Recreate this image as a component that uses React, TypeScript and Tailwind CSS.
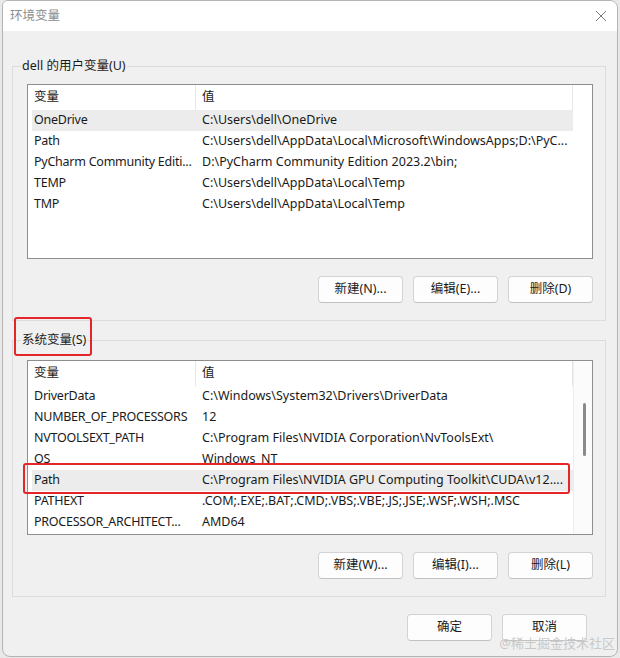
import React from "react";

type Row = { name: string; value: string; selected?: boolean };

const userVars: Row[] = [
  { name: "OneDrive", value: "C:\\Users\\dell\\OneDrive", selected: true },
  { name: "Path", value: "C:\\Users\\dell\\AppData\\Local\\Microsoft\\WindowsApps;D:\\PyC..." },
  { name: "PyCharm Community Editi...", value: "D:\\PyCharm Community Edition 2023.2\\bin;" },
  { name: "TEMP", value: "C:\\Users\\dell\\AppData\\Local\\Temp" },
  { name: "TMP", value: "C:\\Users\\dell\\AppData\\Local\\Temp" },
];

const systemVars: Row[] = [
  { name: "DriverData", value: "C:\\Windows\\System32\\Drivers\\DriverData" },
  { name: "NUMBER_OF_PROCESSORS", value: "12" },
  { name: "NVTOOLSEXT_PATH", value: "C:\\Program Files\\NVIDIA Corporation\\NvToolsExt\\" },
  { name: "OS", value: "Windows_NT" },
  { name: "Path", value: "C:\\Program Files\\NVIDIA GPU Computing Toolkit\\CUDA\\v12....", selected: true },
  { name: "PATHEXT", value: ".COM;.EXE;.BAT;.CMD;.VBS;.VBE;.JS;.JSE;.WSF;.WSH;.MSC" },
  { name: "PROCESSOR_ARCHITECT...", value: "AMD64" },
];

const Button = ({ label, className = "" }: { label: string; className?: string }) => (
  <button
    className={`h-[27px] w-[85px] rounded-[4px] border border-[#d3d3d3] border-b-[#c2c2c2] bg-[#fdfdfd] text-[12.5px] text-[#1b1b1b] ${className}`}
  >
    {label}
  </button>
);

const VarList = ({ rows, scroll }: { rows: Row[]; scroll?: boolean }) => (
  <div className="relative flex h-[175px] w-[566px] border border-[#8e8e8e] bg-white">
    <div className="flex w-[545px] flex-col">
      {/* header */}
      <div className="flex h-[25px] items-center">
        <div className="flex h-full w-[168px] items-center border-r border-[#e6e6e6] pl-[6px]">变量</div>
        <div className="flex h-full w-[377px] items-center border-r border-[#e6e6e6] pl-[6px]">值</div>
      </div>
      {rows.map((r) => (
        <div
          key={r.name}
          className={`ml-[4px] flex h-[21px] w-[541px] items-center ${r.selected ? "bg-[#ececec]" : ""}`}
        >
          <div className="w-[164px] overflow-hidden whitespace-nowrap pl-[2px] tracking-[-0.25px]">{r.name}</div>
          <div className="w-[377px] overflow-hidden whitespace-nowrap pl-[6px]">{r.value}</div>
        </div>
      ))}
    </div>
    {scroll ? (
      <div className="flex flex-1 justify-center border-l border-[#eeeeee] bg-[#fbfbfb] pt-[42px]">
        <div className="ml-[2px] h-[53px] w-[3px] rounded-full bg-[#8a8a8a]" />
      </div>
    ) : (
      <div className="flex-1" />
    )}
  </div>
);

const Group = ({
  title,
  rows,
  buttons,
  scroll,
  className = "",
  listGap,
}: {
  title: string;
  rows: Row[];
  buttons: string[];
  scroll?: boolean;
  className?: string;
  listGap: string;
}) => (
  <fieldset className={`mx-[9px] w-[594px] border border-[#dcdcdc] pl-[14px] pr-[11px] pb-[17px] ${className}`}>
    <legend className="ml-[-6px] px-[1px] text-[12.5px] leading-[16px]">{title}</legend>
    <div className={listGap}>
      <VarList rows={rows} scroll={scroll} />
    </div>
    <div className="mt-[17px] flex justify-end gap-[10px] pr-[1px]">
      {buttons.map((b) => (
        <Button key={b} label={b} />
      ))}
    </div>
  </fieldset>
);

export default function App() {
  return (
    <div className="flex h-[658px] w-[620px] bg-[#e9e9e9] font-['Noto_Sans','Noto_Sans_CJK_SC',sans-serif] text-[12.5px] text-[#1a1a1a]">
      <div className="ml-[2px] flex h-[657px] w-[616px] flex-col overflow-hidden rounded-[8px] rounded-tl-[6px] border border-[#b4b4b4] bg-[#f0f0f0]">
        {/* title bar */}
        <div className="flex h-[30px] items-center justify-between bg-white pl-[7px] pr-[8px]">
          <span className="text-[12.5px] text-[#8c8c8c]">环境变量</span>
          <svg width="12" height="12" viewBox="0 0 12 12" className="mr-[2px]">
            <path d="M1 1 L11 11 M11 1 L1 11" stroke="#7a7a7a" strokeWidth="1" fill="none" />
          </svg>
        </div>

        <div className="relative flex flex-1 flex-col">
          <Group
            className="mt-[27px]"
            listGap="pt-[10px]"
            title="dell 的用户变量(U)"
            rows={userVars}
            buttons={["新建(N)...", "编辑(E)...", "删除(D)"]}
          />
          <Group
            className="mt-[11px]"
            listGap="pt-[12px]"
            title="系统变量(S)"
            rows={systemVars}
            buttons={["新建(W)...", "编辑(I)...", "删除(L)"]}
            scroll
          />
          <div className="mt-[17px] flex justify-end gap-[10px] pr-[30px]">
            <Button label="确定" />
            <Button label="取消" />
          </div>

          {/* annotations */}
          <div className="absolute left-[11px] top-[286px] h-[39px] w-[78px] rounded-[3px] border-[2.5px] border-[#e4262a]" />
          <div className="absolute left-[20px] top-[432px] h-[31px] w-[547px] rounded-[3px] border-[2.5px] border-[#e4262a]" />
          <div className="absolute bottom-[3px] right-[2px] text-[13px] text-[#c9c9c9]">@稀土掘金技术社区</div>
        </div>
      </div>
    </div>
  );
}
